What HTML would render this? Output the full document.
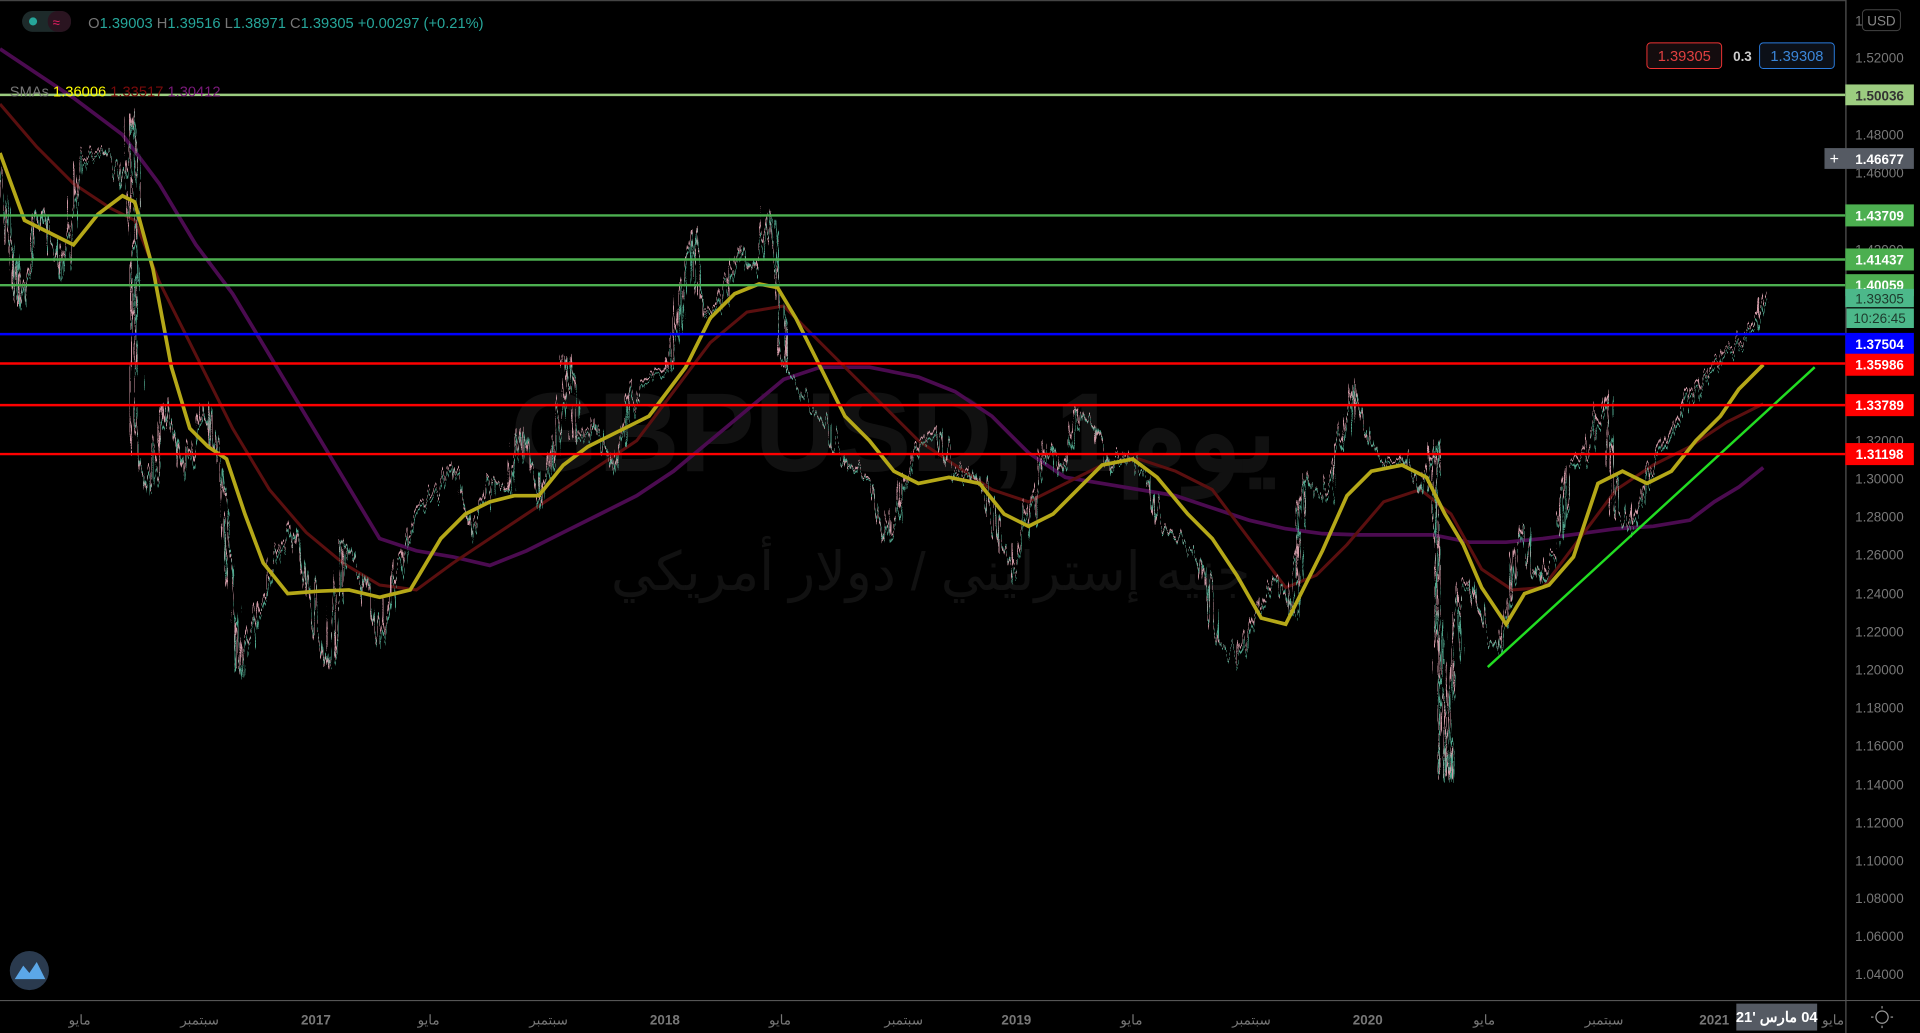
<!DOCTYPE html>
<html><head><meta charset="utf-8"><style>
html,body{margin:0;padding:0;background:#000;overflow:hidden}
svg{display:block}
text{font-family:"Liberation Sans","Noto Sans CJK SC",sans-serif}
</style></head><body>
<svg width="1920" height="1033" viewBox="0 0 1568 844" preserveAspectRatio="none" xmlns="http://www.w3.org/2000/svg">
<defs>
<filter id="jit" x="-5%" y="-10%" width="110%" height="120%">
<feTurbulence type="fractalNoise" baseFrequency="0.35 0.02" numOctaves="2" seed="3" result="n"/>
<feDisplacementMap in="SourceGraphic" in2="n" scale="22" xChannelSelector="R" yChannelSelector="G"/>
</filter>
</defs>
<rect width="1568" height="844" fill="#000"/>
<rect width="1568" height="1" fill="#444"/>
<!-- watermark -->
<text x="730" y="385" font-size="92" fill="#111" text-anchor="middle" font-weight="bold">GBPUSD, 1يوم</text>
<text x="760" y="482" font-size="44" fill="#111" text-anchor="middle">جنيه إسترليني / دولار أمريكي</text>
<!-- SMAs -->
<polyline fill="none" stroke="#4b0b50" stroke-width="3" points="0,40 30,60 60,80 100,110 130,150 160,200 190,240 220,290 250,340 280,390 310,440 340,450 370,455 400,462 430,450 460,435 490,420 520,405 550,385 580,360 610,335 640,310 670,300 710,300 750,308 780,320 810,340 840,370 870,390 900,395 930,400 960,405 990,415 1020,425 1050,432 1080,436 1110,437 1140,437 1170,437 1200,443 1230,443 1260,440 1290,436 1320,432 1350,430 1380,425 1400,410 1420,398 1440,382"/>
<polyline fill="none" stroke="#5a0f0f" stroke-width="2.5" points="0,85 30,120 60,150 90,170 110,180 130,230 160,290 190,350 220,400 250,435 280,460 310,478 340,482 370,460 400,440 430,420 460,400 490,380 520,360 550,320 580,280 610,255 640,250 660,270 690,300 720,330 750,360 780,380 810,400 840,410 870,395 900,380 930,375 960,385 990,400 1020,440 1050,480 1075,470 1100,445 1130,410 1160,400 1185,420 1210,465 1235,482 1260,480 1290,440 1320,400 1350,380 1380,365 1410,345 1440,330"/>
<!-- price -->
<g filter="url(#jit)">
<polyline fill="none" stroke="#d09aa6" stroke-width="1.2" points="0,140 15,250 30,170 50,220 65,130 85,120 100,150 108,90 110,370 120,400 135,330 150,390 165,330 180,380 195,550 210,500 225,450 240,430 255,500 268,545 280,440 295,470 310,525 325,460 340,420 355,400 370,380 385,440 400,390 415,400 425,350 440,410 455,350 462,290 470,360 485,345 500,380 520,310 545,300 555,250 565,185 575,260 590,240 605,200 615,220 628,175 640,300 655,320 670,340 690,380 710,390 722,440 735,400 750,360 765,350 780,390 795,380 810,420 825,470 840,420 855,360 865,380 880,335 895,350 905,380 920,370 935,390 950,430 965,440 980,460 995,520 1010,540 1025,500 1040,470 1055,500 1065,390 1080,410 1095,360 1105,315 1115,360 1130,380 1145,370 1160,400 1170,360 1175,540 1180,635 1190,480 1200,470 1210,510 1225,530 1240,430 1255,470 1270,450 1280,380 1295,370 1310,320 1320,420 1330,430 1345,390 1360,360 1375,330 1390,310 1405,290 1420,280 1430,270 1440,243"/>
<polyline fill="none" stroke="#4fa58c" stroke-width="1" transform="translate(2,3)" points="0,140 15,250 30,170 50,220 65,130 85,120 100,150 108,90 110,370 120,400 135,330 150,390 165,330 180,380 195,550 210,500 225,450 240,430 255,500 268,545 280,440 295,470 310,525 325,460 340,420 355,400 370,380 385,440 400,390 415,400 425,350 440,410 455,350 462,290 470,360 485,345 500,380 520,310 545,300 555,250 565,185 575,260 590,240 605,200 615,220 628,175 640,300 655,320 670,340 690,380 710,390 722,440 735,400 750,360 765,350 780,390 795,380 810,420 825,470 840,420 855,360 865,380 880,335 895,350 905,380 920,370 935,390 950,430 965,440 980,460 995,520 1010,540 1025,500 1040,470 1055,500 1065,390 1080,410 1095,360 1105,315 1115,360 1130,380 1145,370 1160,400 1170,360 1175,540 1180,635 1190,480 1200,470 1210,510 1225,530 1240,430 1255,470 1270,450 1280,380 1295,370 1310,320 1320,420 1330,430 1345,390 1360,360 1375,330 1390,310 1405,290 1420,280 1430,270 1440,243"/>
</g>
<polyline fill="none" stroke="#b5a818" stroke-width="3" points="0,125 20,180 40,190 60,200 80,175 100,160 110,165 125,220 140,300 155,350 170,365 185,375 200,420 215,460 235,485 260,483 285,482 310,488 335,482 360,440 380,420 400,410 420,405 440,405 460,380 480,365 510,350 530,340 560,300 580,260 600,240 620,232 635,235 650,260 670,300 690,340 710,360 730,385 750,395 775,390 800,395 820,420 840,430 860,420 880,400 900,380 925,375 945,390 970,420 990,440 1010,470 1030,505 1050,510 1065,480 1080,450 1100,405 1120,385 1145,380 1165,390 1180,420 1195,445 1210,480 1230,510 1245,485 1265,478 1285,455 1305,395 1325,385 1345,395 1365,385 1385,360 1405,340 1420,318 1440,298"/>
<line x1="1215" y1="545" x2="1482" y2="300" stroke="#22dd22" stroke-width="2"/>
<!-- horizontal levels -->
<line x1="0" y1="77.5" x2="1507" y2="77.5" stroke="#9ccc80" stroke-width="2"/>
<line x1="0" y1="176" x2="1507" y2="176" stroke="#4caf50" stroke-width="2"/>
<line x1="0" y1="212" x2="1507" y2="212" stroke="#4caf50" stroke-width="2"/>
<line x1="0" y1="233" x2="1507" y2="233" stroke="#4caf50" stroke-width="2"/>
<line x1="0" y1="273" x2="1507" y2="273" stroke="#0000ff" stroke-width="2"/>
<line x1="0" y1="297" x2="1507" y2="297" stroke="#ff0000" stroke-width="2"/>
<line x1="0" y1="331" x2="1507" y2="331" stroke="#ff0000" stroke-width="2"/>
<line x1="0" y1="371" x2="1507" y2="371" stroke="#ff0000" stroke-width="2"/>
<!-- header -->
<rect x="18" y="9" width="40" height="17" rx="8.5" fill="#1d2a2a"/>
<rect x="39" y="9" width="19" height="17" rx="8" fill="#2a1420"/>
<circle cx="27" cy="17.5" r="3.3" fill="#26a69a"/>
<text x="43" y="22" font-size="11" fill="#e91e63">≈</text>
<text x="72" y="23" font-size="12" fill="#26a69a"><tspan fill="#777">O</tspan>1.39003 <tspan fill="#777">H</tspan>1.39516 <tspan fill="#777">L</tspan>1.38971 <tspan fill="#777">C</tspan>1.39305 +0.00297 (+0.21%)</text>
<text x="8" y="79" font-size="12" fill="#777">SMAs <tspan fill="#ffff00">1.36006</tspan> <tspan fill="#7a0b0b">1.33517</tspan> <tspan fill="#7a1a7a">1.30412</tspan></text>
<!-- bid/ask -->
<rect x="1345" y="35" width="61" height="21" rx="3" fill="#140c0e" stroke="#e33" stroke-width="0.8"/>
<text x="1375.5" y="50" font-size="12" fill="#e04040" text-anchor="middle">1.39305</text>
<text x="1423" y="50" font-size="11" fill="#ccc" text-anchor="middle" font-weight="bold">0.3</text>
<rect x="1437" y="35" width="61" height="21" rx="3" fill="#0c1018" stroke="#2a7bdc" stroke-width="0.8"/>
<text x="1467.5" y="50" font-size="12" fill="#3b86d8" text-anchor="middle">1.39308</text>
<!-- right axis -->
<rect x="1507" y="0" width="61" height="817" fill="#000"/>
<line x1="1507.5" y1="0" x2="1507.5" y2="844" stroke="#555" stroke-width="1"/>
<line x1="0" y1="817.5" x2="1568" y2="817.5" stroke="#555" stroke-width="1"/>
<g font-size="11" fill="#777">
<text x="1515" y="51">1.52000</text>
<text x="1515" y="114">1.48000</text>
<text x="1515" y="145">1.46000</text>
<text x="1515" y="208">1.42000</text>
<text x="1515" y="364">1.32000</text>
<text x="1515" y="395">1.30000</text>
<text x="1515" y="426">1.28000</text>
<text x="1515" y="457">1.26000</text>
<text x="1515" y="489">1.24000</text>
<text x="1515" y="520">1.22000</text>
<text x="1515" y="551">1.20000</text>
<text x="1515" y="582">1.18000</text>
<text x="1515" y="613">1.16000</text>
<text x="1515" y="645">1.14000</text>
<text x="1515" y="676">1.12000</text>
<text x="1515" y="707">1.10000</text>
<text x="1515" y="738">1.08000</text>
<text x="1515" y="769">1.06000</text>
<text x="1515" y="800">1.04000</text>
<text x="1515" y="21">1</text>
</g>
<rect x="1521" y="8" width="31" height="17" rx="3" fill="#000" stroke="#444" stroke-width="0.8"/>
<text x="1536.5" y="21" font-size="11" fill="#888" text-anchor="middle">USD</text>
<g font-size="11" font-weight="bold" text-anchor="middle">
<rect x="1507" y="69" width="56" height="17" fill="#9ccc80"/><text x="1535" y="82" fill="#333">1.50036</text>
<rect x="1490" y="121" width="73" height="17" fill="#555a63"/><text x="1498" y="134" fill="#fff" font-size="13" font-weight="normal">+</text><text x="1535" y="134" fill="#fff">1.46677</text>
<rect x="1507" y="167" width="56" height="18" fill="#4caf50"/><text x="1535" y="180" fill="#fff">1.43709</text>
<rect x="1507" y="203" width="56" height="18" fill="#4caf50"/><text x="1535" y="216" fill="#fff">1.41437</text>
<rect x="1507" y="224" width="56" height="18" fill="#4caf50"/><text x="1535" y="237" fill="#fff">1.40059</text>
<rect x="1507" y="236" width="56" height="15" fill="#4cb88a"/><text x="1535" y="248" fill="#1d3a2c" font-weight="normal">1.39305</text>
<rect x="1508" y="252" width="55" height="16" fill="#4cb88a"/><text x="1535" y="264" fill="#1d3a2c" font-weight="normal">10:26:45</text>
<rect x="1507" y="272" width="56" height="18" fill="#0000ff"/><text x="1535" y="285" fill="#fff">1.37504</text>
<rect x="1507" y="289" width="56" height="18" fill="#ff0000"/><text x="1535" y="302" fill="#fff">1.35986</text>
<rect x="1507" y="322" width="56" height="18" fill="#ff0000"/><text x="1535" y="335" fill="#fff">1.33789</text>
<rect x="1507" y="362" width="56" height="18" fill="#ff0000"/><text x="1535" y="375" fill="#fff">1.31198</text>
</g>
<!-- time axis -->
<g font-size="11" fill="#777" text-anchor="middle">
<text x="65" y="837">مايو</text><text x="163" y="837">سبتمبر</text><text x="258" y="837" font-weight="bold">2017</text>
<text x="350" y="837">مايو</text><text x="448" y="837">سبتمبر</text><text x="543" y="837" font-weight="bold">2018</text>
<text x="637" y="837">مايو</text><text x="738" y="837">سبتمبر</text><text x="830" y="837" font-weight="bold">2019</text>
<text x="924" y="837">مايو</text><text x="1022" y="837">سبتمبر</text><text x="1117" y="837" font-weight="bold">2020</text>
<text x="1212" y="837">مايو</text><text x="1310" y="837">سبتمبر</text><text x="1400" y="837" font-weight="bold">2021</text>
<text x="1497" y="837">مايو</text>
</g>
<rect x="1418" y="820" width="66" height="22" fill="#555a63"/>
<text x="1451" y="835" font-size="12" fill="#fff" font-weight="bold" text-anchor="middle" direction="rtl" unicode-bidi="embed">04 مارس '21</text>
<rect x="1508" y="818" width="60" height="26" fill="#000"/>
<circle cx="1537" cy="831" r="5" fill="none" stroke="#999" stroke-width="1"/>
<g stroke="#999" stroke-width="1"><line x1="1537" y1="822" x2="1537" y2="824"/><line x1="1537" y1="838" x2="1537" y2="840"/><line x1="1528" y1="831" x2="1530" y2="831"/><line x1="1544" y1="831" x2="1546" y2="831"/></g>
<!-- logo -->
<circle cx="24" cy="793" r="16" fill="#2a3a4e"/>
<path d="M12 800 L19 789 L24 795 L30 786 L37 800 Z" fill="#5ba7e8"/>
</svg>
</body></html>
